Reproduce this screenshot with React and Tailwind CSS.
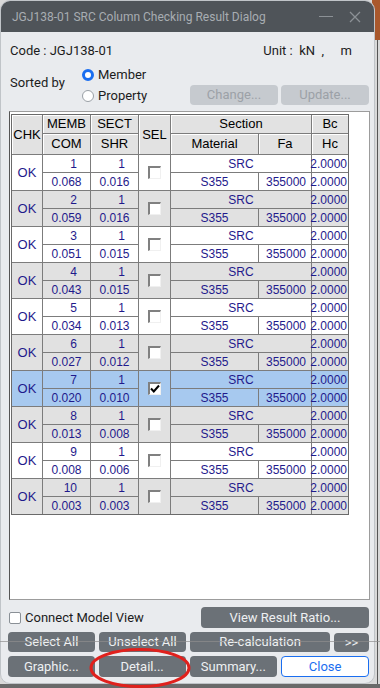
import React from 'react'

const rows = [
  { memb: 1, sect: 1, com: '0.068', shr: '0.016' },
  { memb: 2, sect: 1, com: '0.059', shr: '0.016' },
  { memb: 3, sect: 1, com: '0.051', shr: '0.015' },
  { memb: 4, sect: 1, com: '0.043', shr: '0.015' },
  { memb: 5, sect: 1, com: '0.034', shr: '0.013' },
  { memb: 6, sect: 1, com: '0.027', shr: '0.012' },
  { memb: 7, sect: 1, com: '0.020', shr: '0.010', sel: true },
  { memb: 8, sect: 1, com: '0.013', shr: '0.008' },
  { memb: 9, sect: 1, com: '0.008', shr: '0.006' },
  { memb: 10, sect: 1, com: '0.003', shr: '0.003' },
]

function Check({ on }) {
  return (
    <span className="w-[13px] h-[13px] bg-white border-t-2 border-l-2 border-t-[#808080] border-l-[#808080] border-b border-r border-b-[#f0f0f0] border-r-[#f0f0f0] flex items-center justify-center">
      {on && (
        <svg width="10" height="9" viewBox="0 0 10 9">
          <path d="M1 4.5 L3.8 7.5 L9 1.5" fill="none" stroke="#000" strokeWidth="2" />
        </svg>
      )}
    </span>
  )
}

function Btn({ children, className = '' }) {
  return (
    <button
      type="button"
      className={`rounded-[4px] bg-[#6b7177] text-[#eef0f2] text-[13px] flex items-center justify-center ${className}`}
    >
      {children}
    </button>
  )
}

export default function App() {
  const hdr = 'bg-[#e2e2e2] shadow-[inset_1px_1px_0_#ffffff] flex items-center justify-center text-black text-[13px]'
  return (
    <div className="relative w-[380px] h-[688px] overflow-hidden bg-[#d9d9d9]" style={{ fontFamily: 'Roboto, Inter, sans-serif' }}>
      <div className="absolute right-0 top-0 w-[8px] h-[40px] bg-[#a9582c]" />
      <div className="absolute right-[2px] top-[40px] w-px h-[648px] bg-[#555]" />
      <div className="absolute left-0 bottom-0 w-[380px] h-[4px] bg-[#6a6a6a]" />

      <div className="relative w-[375px] h-[684px] rounded-[10px] overflow-hidden bg-[#e9ebee] border border-[#c0c4c8] flex flex-col">
        {/* title bar */}
        <div className="h-[31px] shrink-0 bg-[#4f5459] flex items-center pl-[11px] pr-[10px]">
          <span className="text-[12px] text-[#a8adb2] flex-1">JGJ138-01 SRC Column Checking Result Dialog</span>
          <span className="w-[14px] h-px bg-[#8c9196] mr-[16px]" />
          <svg width="12" height="12" viewBox="0 0 12 12" className="mr-[3px]">
            <path d="M1 1 L11 11 M11 1 L1 11" stroke="#8c9196" strokeWidth="1.3" />
          </svg>
        </div>

        {/* code / unit */}
        <div className="mt-[9px] h-[20px] flex items-center text-[13px] text-[#1c1c1c] pl-[9px]">
          <span className="flex-1">Code : JGJ138-01</span>
          <span>Unit :&nbsp; kN &nbsp;,</span>
          <span className="w-[50px] text-right pr-[22px]">m</span>
        </div>

        {/* sort */}
        <div className="mt-[3px] h-[42px] flex text-[13px] text-[#1c1c1c] pl-[9px] pr-[5px]">
          <div className="w-[72px] pt-[9px]">Sorted by</div>
          <div className="flex flex-col">
            <label className="h-[21px] flex items-center gap-[4px]">
              <span className="w-[12px] h-[12px] rounded-full border-[3.5px] border-[#1a6ef0] bg-white" />
              Member
            </label>
            <label className="h-[21px] flex items-center gap-[4px]">
              <span className="w-[12px] h-[12px] rounded-full border border-[#9aa0a6] bg-white" />
              Property
            </label>
          </div>
          <div className="flex-1 flex items-end justify-end gap-[3px] pb-[1px]">
            <span className="w-[88px] h-[20px] rounded-[4px] bg-[#c6cacf] text-[#9ca1a7] flex items-center justify-center">Change...</span>
            <span className="w-[88px] h-[20px] rounded-[4px] bg-[#c6cacf] text-[#9ca1a7] flex items-center justify-center">Update...</span>
          </div>
        </div>

        {/* table */}
        <div className="mt-[5px] ml-[8px] w-[361px] h-[489px] bg-white border border-[#9c9c9c] border-l-[#555] pt-[2px] pl-[1px]" style={{ fontFamily: '"Liberation Sans", Arial, sans-serif' }}>
          <div className="w-[338px] grid grid-cols-[30px_47px_47px_31px_87px_52px_36px] grid-rows-[18px_20px] auto-rows-[17px] gap-px bg-[#7c7c7c] border border-[#6a6a6a]">
            <div className={`${hdr} row-span-2`}>CHK</div>
            <div className={hdr}>MEMB</div>
            <div className={hdr}>SECT</div>
            <div className={`${hdr} row-span-2`}>SEL</div>
            <div className={`${hdr} col-span-2`}>Section</div>
            <div className={hdr}>Bc</div>
            <div className={hdr}>COM</div>
            <div className={hdr}>SHR</div>
            <div className={hdr}>Material</div>
            <div className={hdr}>Fa</div>
            <div className={hdr}>Hc</div>
            {rows.map((r, i) => {
              const bg = r.sel ? 'bg-[#a7c9ef]' : i % 2 === 0 ? 'bg-white' : 'bg-[#e1e1e1]'
              const c = `${bg} text-[#1f1a8c] text-[12px] flex items-center`
              return (
                <React.Fragment key={r.memb}>
                  <div className={`${c} row-span-2 justify-center text-[13px]`}>OK</div>
                  <div className={`${c} justify-end pr-[13px]`}>{r.memb}</div>
                  <div className={`${c} justify-end pr-[13px]`}>{r.sect}</div>
                  <div className={`${c} row-span-2 justify-center pb-[1px]`}><Check on={r.sel} /></div>
                  <div className={`${c} col-span-2 justify-center`}>SRC</div>
                  <div className={`${c} justify-end pr-px`}>2.0000</div>
                  <div className={`${c} justify-center`}>{r.com}</div>
                  <div className={`${c} justify-center`}>{r.shr}</div>
                  <div className={`${c} justify-center`}>S355</div>
                  <div className={`${c} justify-end pr-[5px]`}>355000</div>
                  <div className={`${c} justify-end pr-px`}>2.0000</div>
                </React.Fragment>
              )
            })}
          </div>
        </div>

        {/* bottom controls */}
        <div className="mt-[7px] h-[21px] flex items-center pl-[8px] pr-[5px] text-[13px] text-[#1c1c1c]">
          <span className="w-[12px] h-[12px] rounded-[2px] border border-[#8a9096] bg-white mr-[4px]" />
          <span className="flex-1">Connect Model View</span>
          <Btn className="w-[168px] h-[21px]">View Result Ratio...</Btn>
        </div>
        <div className="mt-[4px] h-[20px] flex gap-[4px] pl-[7px] pr-[5px]">
          <Btn className="w-[87px]">Select All</Btn>
          <Btn className="w-[87px]">Unselect All</Btn>
          <Btn className="w-[140px]">Re-calculation</Btn>
          <Btn className="w-[35px] mt-[1px]">&gt;&gt;</Btn>
        </div>
        <div className="mt-[4px] h-[21px] flex gap-[4px] pl-[7px] pr-[5px]">
          <Btn className="w-[87px]">Graphic...</Btn>
          <Btn className="w-[87px]">Detail...</Btn>
          <Btn className="w-[88px]">Summary...</Btn>
          <button type="button" className="w-[88px] rounded-[4px] bg-white border border-[#1a6ef0] text-[#1a6ef0] text-[13px]">Close</button>
        </div>
      </div>

      {/* stray line across the buttons */}
      <div className="absolute left-0 top-[641px] w-[380px] h-px bg-[#8f8f8f]/70" />
      {/* red annotation ellipse */}
      <svg className="absolute left-0 top-0" width="380" height="688" viewBox="0 0 380 688">
        <ellipse cx="140" cy="668" rx="49" ry="18.5" fill="none" stroke="#e0211d" strokeWidth="3" />
      </svg>
    </div>
  )
}
